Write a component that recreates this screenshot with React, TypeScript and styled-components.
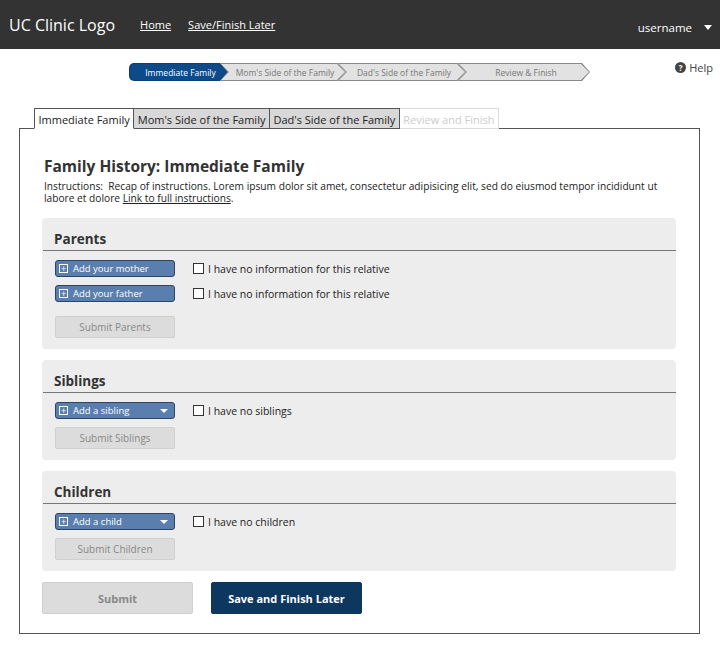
import React from "react";
import styled, { createGlobalStyle } from "styled-components";

const Global = createGlobalStyle`
  html, body { margin: 0; padding: 0; background: #fff; }
  body { font-family: "Open Sans", "Noto Sans", sans-serif; color: #222; }
`;

const Header = styled.header`
  height: 49px; background: #333; display: flex; align-items: center; padding: 0 8px 0 9px; color: #fff;
`;
const Logo = styled.div` font-size: 16px; margin-right: 25px; `;
const NavLink = styled.a` color: #fff; text-decoration: underline; font-size: 11px; margin-right: 17px; `;
const User = styled.div` margin-left: auto; font-size: 11.5px; display: flex; align-items: center; gap: 12px; padding-top: 5px;`;
const Caret = styled.span` border-left: 4px solid transparent; border-right: 4px solid transparent; border-top: 5px solid #fff; `;

const TopRow = styled.div` position: relative; height: 50px; display: flex; padding: 14px 0 0 129px; box-sizing: border-box; `;
const Step = styled.div<{ $w: number; $active?: boolean; $first?: boolean }>`
  width: ${p => p.$w}px; height: 18px; margin-right: -8px; position: relative;
  background: ${p => (p.$active ? "#0d3f75" : "#888")};
  clip-path: ${p => p.$first ? "polygon(0 0, calc(100% - 8px) 0, 100% 50%, calc(100% - 8px) 100%, 0 100%)" : "polygon(0 0, calc(100% - 8px) 0, 100% 50%, calc(100% - 8px) 100%, 0 100%, 8px 50%)"};
  border-radius: ${p => (p.$first ? "5px 0 0 5px" : "0")};
  &::before { content: ""; position: absolute; inset: 1px;
    background: ${p => (p.$active ? "#0d4a8a" : "#e2e2e2")};
    clip-path: inherit; border-radius: inherit; }
`;
const StepText = styled.span<{ $active?: boolean }>`
  position: relative; display: flex; justify-content: center; align-items: center; height: 100%; padding-left: 4px;
  font-size: 8.5px; color: ${p => (p.$active ? "#fff" : "#777")}; white-space: nowrap;
`;
const Help = styled.div` position: absolute; right: 7px; top: 11px; font-size: 11px; color: #444; display: flex; align-items: center; gap: 3px; `;
const HelpIcon = styled.span` width: 11px; height: 11px; border-radius: 50%; background: #444; color: #fff; font-size: 8px; font-weight: 700; display: flex; align-items: center; justify-content: center; `;

const Main = styled.div` padding: 9px 20px 18px 19px; `;
const Tabs = styled.div` display: flex; padding-left: 15px; position: relative; z-index: 1; margin-bottom: -1px; `;
const Tab = styled.div<{ $k: "active" | "normal" | "disabled" }>`
  font-size: 11px; height: 21px; line-height: 21px; padding: 0 3.5px; box-sizing: border-box;
  border: 1px solid ${p => (p.$k === "disabled" ? "#ddd" : "#555")};
  border-bottom: ${p => (p.$k === "active" ? "1px solid #fff" : "1px solid #555")};
  ${p => p.$k !== "active" && "border-left: none;"}
  background: ${p => (p.$k === "active" ? "#fff" : p.$k === "normal" ? "#d8d8d8" : "#fff")};
  color: ${p => (p.$k === "disabled" ? "#ccc" : "#222")};
  ${p => p.$k === "disabled" && "border-bottom-color:#ddd; border-left: none;"}
`;
const Box = styled.div` border: 1px solid #555; padding: 26px 23px 19px 22px; `;
const Title = styled.h1` margin: 0 0 3px 2px; font-size: 15.5px; font-weight: 700; color: #333; `;
const Instr = styled.p` margin: 0 0 14px 2px; font-size: 10.2px; line-height: 12px; color: #222; padding-right: 10px; a { color: #222; } `;
const Panel = styled.section` background: #ededed; border-radius: 4px; padding: 12px 0 11px 0; margin-bottom: 11px; `;
const PanelTitle = styled.h2` margin: 0 0 0 12px; font-size: 13.5px; font-weight: 700; color: #333; padding-bottom: 2px; `;
const Rule = styled.div` border-top: 1px solid #777; margin-left: 1px; margin-bottom: 9px; `;
const Row = styled.div` display: flex; align-items: center; padding-left: 13px; margin-bottom: 8px; `;
const AddBtn = styled.div` width: 120px; height: 17px; box-sizing: border-box; background: #5a7fae; border: 1px solid #2d4463; border-radius: 3px; color: #fff; font-size: 9.5px; display: flex; align-items: center; padding: 0 6px 0 3px; gap: 5px; margin-right: 18px; `;
const Plus = styled.span` width: 9px; height: 9px; border: 1px solid #fff; font-size: 9px; line-height: 8px; text-align: center; box-sizing: border-box; `;
const DropCaret = styled.span` margin-left: auto; border-left: 4px solid transparent; border-right: 4px solid transparent; border-top: 4px solid #fff; `;
const Check = styled.label` display: flex; align-items: center; gap: 4px; font-size: 10.5px; color: #222; `;
const Box2 = styled.span` width: 9px; height: 9px; border: 1px solid #333; background: #fff; `;
const SubBtn = styled.div<{ $mt?: number }>` margin: ${p => p.$mt ?? 0}px 0 0 13px; width: 120px; height: 22px; background: #dcdcdc; border: 1px solid #d0d0d0; border-radius: 2px; box-sizing: border-box; color: #888; font-size: 10px; display: flex; align-items: center; justify-content: center; `;
const Actions = styled.div` display: flex; gap: 18px; `;
const BigBtn = styled.div<{ $primary?: boolean }>` width: 151px; height: 32px; border-radius: 2px; display: flex; align-items: center; justify-content: center; font-size: 11px; font-weight: 700;
  background: ${p => (p.$primary ? "#0e3760" : "#dcdcdc")}; color: ${p => (p.$primary ? "#fff" : "#888")}; border: 1px solid ${p => (p.$primary ? "#0e3760" : "#d0d0d0")}; box-sizing: border-box; `;

const Add = ({ label, drop }: { label: string; drop?: boolean }) => (
  <AddBtn><Plus>+</Plus>{label}{drop && <DropCaret />}</AddBtn>
);
const Cb = ({ t }: { t: string }) => <Check><Box2 />{t}</Check>;

export default function App() {
  return (
    <>
      <Global />
      <Header>
        <Logo>UC Clinic Logo</Logo>
        <NavLink>Home</NavLink>
        <NavLink>Save/Finish Later</NavLink>
        <User>username <Caret /></User>
      </Header>
      <TopRow>
        <Step $w={99} $active $first><StepText $active>Immediate Family</StepText></Step>
        <Step $w={126}><StepText>Mom's Side of the Family</StepText></Step>
        <Step $w={128}><StepText>Dad's Side of the Family</StepText></Step>
        <Step $w={132}><StepText>Review &amp; Finish</StepText></Step>
        <Help><HelpIcon>?</HelpIcon>Help</Help>
      </TopRow>
      <Main>
        <Tabs>
          <Tab $k="active" style={{ borderLeft: "1px solid #555" }}>Immediate Family</Tab>
          <Tab $k="normal">Mom's Side of the Family</Tab>
          <Tab $k="normal">Dad's Side of the Family</Tab>
          <Tab $k="disabled">Review and Finish</Tab>
        </Tabs>
        <Box>
          <Title>Family History: Immediate Family</Title>
          <Instr>Instructions:&nbsp; Recap of instructions. Lorem ipsum dolor sit amet, consectetur adipisicing elit, sed do eiusmod tempor incididunt ut labore et dolore <a href="#">Link to full instructions</a>.</Instr>
          <Panel>
            <PanelTitle>Parents</PanelTitle>
            <Rule />
            <Row><Add label="Add your mother" /><Cb t="I have no information for this relative" /></Row>
            <Row><Add label="Add your father" /><Cb t="I have no information for this relative" /></Row>
            <SubBtn $mt={14}>Submit Parents</SubBtn>
          </Panel>
          <Panel>
            <PanelTitle>Siblings</PanelTitle>
            <Rule />
            <Row><Add label="Add a sibling" drop /><Cb t="I have no siblings" /></Row>
            <SubBtn>Submit Siblings</SubBtn>
          </Panel>
          <Panel>
            <PanelTitle>Children</PanelTitle>
            <Rule />
            <Row><Add label="Add a child" drop /><Cb t="I have no children" /></Row>
            <SubBtn>Submit Children</SubBtn>
          </Panel>
          <Actions>
            <BigBtn>Submit</BigBtn>
            <BigBtn $primary>Save and Finish Later</BigBtn>
          </Actions>
        </Box>
      </Main>
    </>
  );
}
